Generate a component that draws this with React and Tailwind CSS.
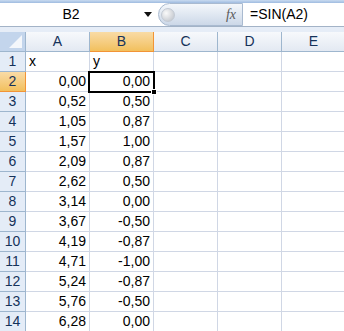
import React from 'react';

const rows = [
  ['x', 'y'],
  ['0,00', '0,00'],
  ['0,52', '0,50'],
  ['1,05', '0,87'],
  ['1,57', '1,00'],
  ['2,09', '0,87'],
  ['2,62', '0,50'],
  ['3,14', '0,00'],
  ['3,67', '-0,50'],
  ['4,19', '-0,87'],
  ['4,71', '-1,00'],
  ['5,24', '-0,87'],
  ['5,76', '-0,50'],
  ['6,28', '0,00'],
];

const cols = ['A', 'B', 'C', 'D', 'E'];

function FormulaBar() {
  return (
    <div className="h-[32px] flex flex-col bg-[#e6edf7]">
      <div className="h-[3px] bg-gradient-to-b from-[#c9dbf0] to-[#9fbbe0]" />
      <div className="h-[24px] flex bg-white border-b border-[#a3b3c7]">
        <div className="w-[158px] flex items-center relative">
          <span className="flex-1 text-center text-[14px] text-black pr-[16px]">B2</span>
          <svg className="absolute left-[144px] top-[9px]" width="8" height="5" viewBox="0 0 8 5">
            <path d="M0 0H8L4 5Z" fill="#111" />
          </svg>
        </div>
        <div className="w-[85px] h-[23px] flex items-center rounded-l-full border border-[#a9bad0] bg-gradient-to-b from-[#f4f7fb] to-[#ccd8e8]">
          <div className="ml-[2px] w-[14px] h-[14px] rounded-full bg-[radial-gradient(circle_at_35%_35%,#fafafa,#b9bec6)] border border-[#c3cad4]" />
          <span className="ml-auto mr-[6px] text-[14px] italic text-[#5a5a5a] font-['Liberation_Serif',serif]">fx</span>
        </div>
        <div className="flex-1 flex items-center pl-[7px] text-[14px] text-black">=SIN(A2)</div>
      </div>
    </div>
  );
}

export default function App() {
  return (
    <div className="w-[344px] h-[331px] overflow-hidden bg-white font-['Liberation_Sans',sans-serif]">
      <FormulaBar />
      <div className="relative grid grid-cols-[26px_64px_64px_64px_64px_64px] auto-rows-[20px]">
        <div className="border-r border-b border-[#9eb6ce] bg-[#c3d5ec] relative">
          <svg className="absolute right-[3px] bottom-[3px]" width="13" height="13" viewBox="0 0 13 13">
            <path d="M13 0V13H0Z" fill="#f4f7fb" />
          </svg>
        </div>
        {cols.map((c) => (
          <div
            key={c}
            className={
              c === 'B'
                ? 'flex items-center justify-center text-[14px] text-[#15325a] border-r border-b border-[#f29436] bg-gradient-to-b from-[#f9dba5] to-[#f2c05c]'
                : 'flex items-center justify-center text-[14px] text-[#15325a] border-r border-b border-[#9eb6ce] bg-gradient-to-b from-[#f7f9fc] to-[#e3e9f2]'
            }
          >
            {c}
          </div>
        ))}
        {rows.map((r, i) => (
          <React.Fragment key={i}>
            <div
              className={
                i === 1
                  ? 'flex items-center justify-center text-[14px] text-[#15325a] border-r border-b border-[#f29436] bg-gradient-to-b from-[#f9dba5] to-[#f2c05c]'
                  : 'flex items-center justify-center text-[14px] text-[#15325a] border-r border-b border-[#9eb6ce] bg-[#e4ecf7]'
              }
            >
              {i + 1}
            </div>
            {[0, 1].map((j) => (
              <div
                key={j}
                className={
                  i === 0
                    ? 'flex items-end pb-[2px] pl-[3px] text-[14px] leading-[15px] text-black border-r border-b border-[#d0d7e5]'
                    : 'flex items-end justify-end pb-[2px] pr-[3px] text-[14px] leading-[15px] text-black border-r border-b border-[#d0d7e5]'
                }
              >
                {r[j]}
              </div>
            ))}
            <div className="border-r border-b border-[#d0d7e5]" />
            <div className="border-r border-b border-[#d0d7e5]" />
            <div className="border-r border-b border-[#d0d7e5]" />
          </React.Fragment>
        ))}
        <div className="absolute left-[88px] top-[39px] w-[67px] h-[22px] border-2 border-black pointer-events-none" />
        <div className="absolute left-[151px] top-[57px] w-[6px] h-[6px] bg-black border border-white pointer-events-none" />
      </div>
    </div>
  );
}
